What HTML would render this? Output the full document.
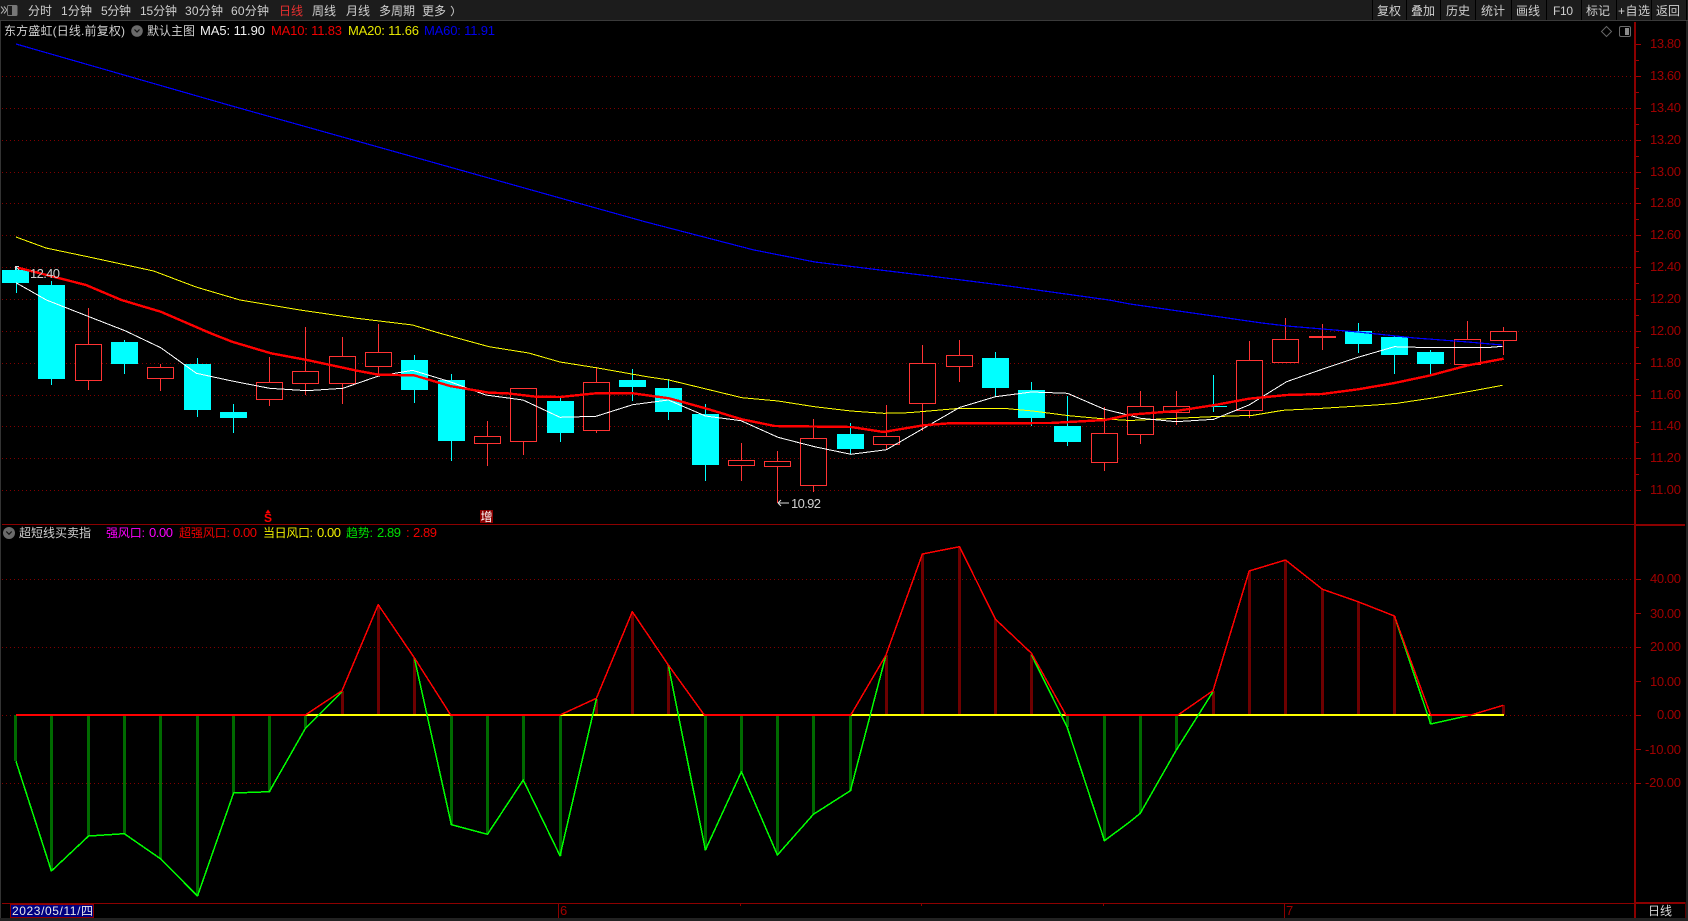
<!DOCTYPE html>
<html lang="zh">
<head>
<meta charset="utf-8">
<title>东方盛虹 日线</title>
<style>
html,body{margin:0;padding:0;background:#000;overflow:hidden}
svg{display:block;position:absolute;left:0;top:0}
text{font-family:"Liberation Sans","Noto Sans CJK SC",sans-serif;font-size:12px}
.tb text{fill:#cfcfcf}
.ax text{fill:#a00000;font-size:13px;text-anchor:start}
.num{font-size:13px}
.cr{shape-rendering:crispEdges}
</style>
</head>
<body>
<svg width="1688" height="921" viewBox="0 0 1688 921" xmlns="http://www.w3.org/2000/svg">
<rect width="1688" height="921" fill="#000"/>

<!-- toolbar -->
<rect width="1688" height="20" fill="#1c1c1c"/>
<rect y="20" width="1688" height="1" fill="#3a3a3a"/>
<path d="M1 6.5L4 10L1 13.5M4 6.5L7 10L4 13.5" fill="none" stroke="#b0b0b0"/>
<rect x="7.5" y="5.5" width="9.5" height="10" rx="1" fill="#1c1c1c" stroke="#777"/>
<rect x="12" y="6" width="5" height="9" fill="#777"/>
<g class="tb">
<text x="28" y="15" textLength="24">分时</text>
<text x="61" y="15" textLength="31">1分钟</text>
<text x="101" y="15" textLength="30">5分钟</text>
<text x="140" y="15" textLength="37">15分钟</text>
<text x="185" y="15" textLength="38">30分钟</text>
<text x="231" y="15" textLength="38">60分钟</text>
<text x="279" y="15" textLength="24" style="fill:#e83030">日线</text>
<text x="312" y="15" textLength="24">周线</text>
<text x="346" y="15" textLength="24">月线</text>
<text x="379" y="15" textLength="36">多周期</text>
<text x="422" y="15" textLength="24">更多</text>
<path d="M451 6Q456 11 451 16" fill="none" stroke="#bbb"/>
<text x="1377" y="15" textLength="24">复权</text>
<text x="1411" y="15" textLength="24">叠加</text>
<text x="1446" y="15" textLength="24">历史</text>
<text x="1481" y="15" textLength="24">统计</text>
<text x="1516" y="15" textLength="24">画线</text>
<text x="1553" y="15" textLength="20">F10</text>
<text x="1586" y="15" textLength="24">标记</text>
<text x="1618" y="15" textLength="32">+自选</text>
<text x="1656" y="15" textLength="24">返回</text>
</g>
<path d="M1372.5 0V20M1406.5 0V20M1440.5 0V20M1475.5 0V20M1511.5 0V20M1546.5 0V20M1581.5 0V20M1616.5 0V20M1651.5 0V20M1686.5 0V20" stroke="#000"/>

<!-- frame -->
<rect x="0" y="21" width="1" height="900" fill="#333"/>
<rect x="1686" y="21" width="2" height="900" fill="#222"/>
<rect x="0" y="918" width="1688" height="3" fill="#222"/>

<!-- grid -->
<path d="M2 76.5H1634M2 108.5H1634M2 140.5H1634M2 172.5H1634M2 203.5H1634M2 235.5H1634M2 267.5H1634M2 299.5H1634M2 331.5H1634M2 363.5H1634M2 395.5H1634M2 426.5H1634M2 458.5H1634M2 490.5H1634M2 579.5H1634M2 647.5H1634M2 715.5H1634M2 783.5H1634" stroke="#800000" stroke-dasharray="1 3" fill="none"/>

<!-- axes -->
<rect x="1634" y="22" width="2" height="896" fill="#8c0000"/>
<rect x="2" y="524" width="1632" height="1" fill="#8c0000"/>
<rect x="1634" y="524" width="51" height="2" fill="#8c0000"/>
<rect x="2" y="903" width="1632" height="1" fill="#8c0000"/>
<rect x="1634" y="902" width="51" height="2" fill="#8c0000"/>
<rect x="1685" y="902" width="1" height="16" fill="#5a0000"/>
<path d="M558.5 903V918M1284.5 903V918" stroke="#8c0000"/>
<path d="M740.5 903V906M921.5 903V906M1103.5 903V906" stroke="#8c0000"/>
<path d="M1636 44.5h5M1636 76.5h5M1636 108.5h5M1636 140.5h5M1636 172.5h5M1636 203.5h5M1636 235.5h5M1636 267.5h5M1636 299.5h5M1636 331.5h5M1636 363.5h5M1636 395.5h5M1636 426.5h5M1636 458.5h5M1636 490.5h5M1636 579.5h5M1636 613.5h5M1636 647.5h5M1636 681.5h5M1636 715.5h5M1636 749.5h5M1636 783.5h5" stroke="#a00000"/>
<path d="M1636 60.5h3M1636 92.5h3M1636 124.5h3M1636 156.5h3M1636 188.5h3M1636 219.5h3M1636 251.5h3M1636 283.5h3M1636 315.5h3M1636 347.5h3M1636 379.5h3M1636 411.5h3M1636 442.5h3M1636 474.5h3" stroke="#a00000"/>
<g class="ax">
<text x="1650" y="48" textLength="31">13.80</text>
<text x="1650" y="80" textLength="31">13.60</text>
<text x="1650" y="112" textLength="31">13.40</text>
<text x="1650" y="144" textLength="31">13.20</text>
<text x="1650" y="176" textLength="31">13.00</text>
<text x="1650" y="207" textLength="31">12.80</text>
<text x="1650" y="239" textLength="31">12.60</text>
<text x="1650" y="271" textLength="31">12.40</text>
<text x="1650" y="303" textLength="31">12.20</text>
<text x="1650" y="335" textLength="31">12.00</text>
<text x="1650" y="367" textLength="31">11.80</text>
<text x="1650" y="399" textLength="31">11.60</text>
<text x="1650" y="430" textLength="31">11.40</text>
<text x="1650" y="462" textLength="31">11.20</text>
<text x="1650" y="494" textLength="31">11.00</text>
<text x="1650" y="583" textLength="31">40.00</text>
<text x="1650" y="618" textLength="31">30.00</text>
<text x="1650" y="651" textLength="31">20.00</text>
<text x="1650" y="686" textLength="31">10.00</text>
<text x="1657" y="719" textLength="24">0.00</text>
<text x="1645" y="754" textLength="36">-10.00</text>
<text x="1645" y="787" textLength="36">-20.00</text>
</g>

<!-- up candles -->
<g stroke="#ff3333" fill="#000">
<path d="M88.5 308V390M160.5 364V391M269.5 357V406M305.5 327V395M342.5 337V404M378.5 324V375M487.5 421V466M523.5 388V455M596.5 367V433M741.5 443V481M777.5 451V503M813.5 419V492M886.5 405V449M922.5 345V431M959.5 340V382M1104.5 407V471M1140.5 391V444M1176.5 391V425M1249.5 341V418M1285.5 318V363M1322.5 324V350M1467.5 321V365M1503.5 327V355"/>
<rect x="75.5" y="344.5" width="26" height="36"/>
<rect x="147.5" y="367.5" width="26" height="11"/>
<rect x="256.5" y="382.5" width="26" height="17"/>
<rect x="292.5" y="371.5" width="26" height="12"/>
<rect x="329.5" y="356.5" width="26" height="27"/>
<rect x="365.5" y="352.5" width="26" height="14"/>
<rect x="474.5" y="436.5" width="26" height="7"/>
<rect x="510.5" y="388.5" width="26" height="53"/>
<rect x="583.5" y="382.5" width="26" height="48"/>
<rect x="728.5" y="460.5" width="26" height="5"/>
<rect x="764.5" y="461.5" width="26" height="5"/>
<rect x="800.5" y="438.5" width="26" height="47"/>
<rect x="873.5" y="436.5" width="26" height="8"/>
<rect x="909.5" y="363.5" width="26" height="40"/>
<rect x="946.5" y="355.5" width="26" height="11"/>
<rect x="1091.5" y="433.5" width="26" height="29"/>
<rect x="1127.5" y="406.5" width="26" height="28"/>
<rect x="1163.5" y="406.5" width="26" height="6"/>
<rect x="1236.5" y="360.5" width="26" height="50"/>
<rect x="1272.5" y="339.5" width="26" height="23"/>
<rect x="1309" y="336" width="27" height="2" fill="#ff3333" stroke="none"/>
<rect x="1454.5" y="339.5" width="26" height="25"/>
<rect x="1490.5" y="331.5" width="26" height="9"/>
</g>
<!-- down candles -->
<g fill="#00ffff">
<path stroke="#00ffff" d="M16.5 267V293M51.5 281V385M124.5 340V374M197.5 358V417M233.5 404V433M414.5 355V403M451.5 374V461M560.5 396V442M632.5 369V401M668.5 379V420M705.5 404V481M850.5 423V454M995.5 352V396M1031.5 382V426M1067.5 396V446M1213.5 375V412M1358.5 323V353M1394.5 336V374M1430.5 350V374"/>
<rect x="2" y="270" width="27" height="13"/>
<rect x="38" y="285" width="27" height="94"/>
<rect x="111" y="342" width="27" height="22"/>
<rect x="184" y="364" width="27" height="46"/>
<rect x="220" y="412" width="27" height="6"/>
<rect x="401" y="360" width="27" height="30"/>
<rect x="438" y="380" width="27" height="61"/>
<rect x="547" y="401" width="27" height="32"/>
<rect x="619" y="380" width="27" height="7"/>
<rect x="655" y="388" width="27" height="24"/>
<rect x="692" y="414" width="27" height="51"/>
<rect x="837" y="434" width="27" height="15"/>
<rect x="982" y="358" width="27" height="30"/>
<rect x="1018" y="390" width="27" height="28"/>
<rect x="1054" y="426" width="27" height="16"/>
<rect x="1200" y="406" width="27" height="1"/>
<rect x="1345" y="331" width="27" height="13"/>
<rect x="1381" y="337" width="27" height="18"/>
<rect x="1417" y="352" width="27" height="12"/>
</g>

<!-- moving averages -->
<g fill="none" stroke-linejoin="round" class="cr">
<polyline stroke="#0000ff" stroke-width="1.2" points="16,44 232,106 560,198 646,222 754,250 815,262 880,270 930,276 1001,285 1109,300 1130,304 1262,323 1287,326 1358,332 1415,338 1468,342 1502,345"/>
<polyline stroke="#ffff00" stroke-width="1" points="16,237 46,248 89,257 153.6,271 196,287 240,300 300,310 357,318.3 412.5,325 439,333 489,346.7 528.6,353 560,362 596,367.7 647,376.7 669,380 742,397.7 778,401 814.5,406.7 851,411 883.5,413.3 909,412.7 960,408.3 1003.5,408.3 1032.5,411 1069,415.7 1105,419 1130,420.5 1176,418.3 1212,416.7 1253,415.3 1283,410.3 1322,408.3 1375.6,405 1397,403.3 1432.5,398 1468,391.7 1502.6,385.3"/>
<polyline stroke="#ffffff" stroke-width="1" points="16,282.7 46.4,300 89,316.7 125,330.7 160.7,347.7 196.4,373.3 232,381 269.6,388.3 307,390.7 342.9,388.3 378.6,376 412.5,370.3 450,381.7 485.7,395 523,400 560,417.3 596,416.3 632.7,404.7 668.3,400 705.4,416 741,420.7 778,437.3 814.5,446.7 851,454.3 886.4,449.7 923.5,428.3 960,407.3 995.5,396.7 1031.5,392 1067.5,393.3 1104.5,409.3 1130,415.5 1140.7,418.3 1176,421.7 1213.6,419.3 1249,405 1286.6,381.7 1322,369.3 1358,357.3 1394.4,346.7 1432.5,347.7 1486,347.7 1502.6,346.3"/>
<polyline stroke="#ff0000" stroke-width="2.4" points="18,267.7 86,285 121.4,300 160.7,311.7 210.7,333.3 232,341.7 271,353.3 307,360 357,370.7 378.6,374.7 414,375.3 450,386 489,392.7 507,393.3 536,396.7 560,397 596,393.3 632.7,393.3 669,398.3 705.4,408.3 741.8,419.3 774.5,426 851,427 883.5,432 923.5,425.3 949,423.3 1050.7,423 1105,420 1130,414.7 1176,411 1215,405 1249,398.7 1286.6,395 1322,394 1358,389.3 1393,383.3 1429,375.7 1468,365.3 1503.7,358.7"/>
</g>

<!-- price markers -->
<path d="M16 267L19 270M15.5 270V266.5H19" fill="none" stroke="#ddd"/>
<text x="30" y="278" class="num" textLength="30" fill="#cfcfcf">12.40</text>
<path d="M778 503H789M778 503L781 500M778 503L781 506" fill="none" stroke="#ddd"/>
<text x="791" y="508" class="num" textLength="30" fill="#cfcfcf">10.92</text>
<path d="M268 509.5L270.5 513H265.5Z" fill="#f00"/>
<text x="264" y="522" style="font-size:12px;font-weight:bold" fill="#f00">S</text>
<rect x="480" y="510" width="13" height="13" fill="#8b0000"/>
<text x="480.5" y="521" style="font-size:12px" fill="#fff">增</text>

<!-- title row -->
<text x="4" y="35" textLength="121" fill="#cfcfcf">东方盛虹(日线.前复权)</text>
<circle cx="137" cy="31" r="5.8" fill="#6a6a6a"/>
<path d="M134.5 29.5L137 32L139.5 29.5" fill="none" stroke="#111" stroke-width="1.2"/>
<text x="147" y="35" textLength="48" fill="#cfcfcf">默认主图</text>
<text x="200" y="35" class="num" textLength="65" fill="#f0f0f0">MA5: 11.90</text>
<text x="271" y="35" class="num" textLength="71" fill="#f00000">MA10: 11.83</text>
<text x="348" y="35" class="num" textLength="71" fill="#e6e600">MA20: 11.66</text>
<text x="424" y="35" class="num" textLength="71" fill="#0000ee">MA60: 11.91</text>
<path d="M1606.5 26.5L1611.5 31.5L1606.5 36.5L1601.5 31.5Z" fill="none" stroke="#666"/>
<rect x="1619.5" y="26.5" width="11" height="10" rx="1.5" fill="#000" stroke="#6a6a6a"/>
<rect x="1625" y="28" width="4" height="7" fill="#8a8a8a"/>

<!-- indicator row -->
<circle cx="9" cy="533" r="6" fill="#6a6a6a"/>
<path d="M6.3 531.5L9 534.3L11.7 531.5" fill="none" stroke="#111" stroke-width="1.2"/>
<text x="19" y="537" textLength="72" fill="#cfcfcf">超短线买卖指</text>
<text x="106" y="537" textLength="39" fill="#ff00ff">强风口:</text>
<text x="149" y="537" class="num" textLength="24" fill="#ff00ff">0.00</text>
<text x="179" y="537" textLength="51" fill="#f00000">超强风口:</text>
<text x="233" y="537" class="num" textLength="24" fill="#f00000">0.00</text>
<text x="263" y="537" textLength="50" fill="#f0f000">当日风口:</text>
<text x="317" y="537" class="num" textLength="24" fill="#f0f000">0.00</text>
<text x="346" y="537" textLength="27" fill="#00e000">趋势:</text>
<text x="377" y="537" class="num" textLength="24" fill="#00e000">2.89</text>
<text x="406" y="537" class="num" fill="#f00000">:</text>
<text x="413" y="537" class="num" textLength="24" fill="#f00000">2.89</text>

<!-- indicator bars -->
<g stroke-width="3" fill="none" class="cr">
<path stroke="#006a00" d="M15.5 715V761M51.5 715V871M88.5 715V836M124.5 715V834M160.5 715V859M197.5 715V896M233.5 715V793M269.5 715V792M305.5 715V728M451.5 715V825M487.5 715V834M523.5 715V780M560.5 715V856M705.5 715V850M741.5 715V772M777.5 715V855M813.5 715V814M850.5 715V791M1067.5 715V727M1104.5 715V841M1140.5 715V813M1176.5 715V750M1430.5 715V724"/>
<path stroke="#6e0000" d="M342.5 715V691M378.5 715V605M414.5 715V658M596.5 715V699M632.5 715V612M668.5 715V665M886.5 715V655M922.5 715V554M959.5 715V547M995.5 715V619M1031.5 715V654M1213.5 715V691M1249.5 715V571M1285.5 715V560M1322.5 715V589M1358.5 715V602M1394.5 715V616M1503.5 715V705"/>
</g>
<!-- indicator lines -->
<rect x="16" y="714" width="1488" height="2" fill="#ffff00"/>
<g fill="none" stroke-width="1.5" stroke-linejoin="round" class="cr">
<polyline stroke="#00ff00" points="16,761.3 51.4,871 88.6,836 124.3,833.7 160.4,858.7 197.5,896 233.6,793 269.3,791.7 305.4,728.3 342,691.7"/>
<polyline stroke="#00ff00" points="414.3,657.7 451.4,824.7 487.5,834.3 523.2,780 560,855.7 596.4,699"/>
<polyline stroke="#00ff00" points="668.3,665 705.4,850 741.4,771.7 777.4,855 813.4,814.3 850.4,790.7 886,655"/>
<polyline stroke="#00ff00" points="1031.5,655 1067,726.7 1104.5,840.7 1130,821.7 1140.3,813.3 1176.3,750 1213,691.7"/>
<polyline stroke="#00ff00" points="1394.4,616 1430.7,724 1468,715.7"/>
<polyline stroke="#ff0000" points="16,715 305.4,715 342,690.7 378.2,604.7 414.3,657.7 450.7,715 560,715 596.4,698.3 632.3,611.7 668.3,665 704.3,715 850.8,715 886,655 922.4,554 959.5,546.7 995.5,619.3 1031.5,653.3 1066,715 1178,715 1213,690.7 1249.2,571 1285.5,560 1322.5,589.3 1358,601.7 1394.4,616 1430.7,715 1471,715 1503.3,705.3"/>
</g>
<g>
<rect x="16" y="714" width="289" height="2" fill="#ff0000"/>
<rect x="451" y="714" width="109" height="2" fill="#ff0000"/>
<rect x="704" y="714" width="147" height="2" fill="#ff0000"/>
<rect x="1066" y="714" width="112" height="2" fill="#ff0000"/>
<rect x="1431" y="714" width="40" height="2" fill="#ff0000"/>
</g>

<!-- date row -->
<rect x="10.5" y="904.5" width="83" height="13" fill="#000080" stroke="#8c0000"/>
<text x="12" y="915" textLength="81" fill="#e8e8e8">2023/05/11/四</text>
<text x="560" y="915" class="num" fill="#a00000">6</text>
<text x="1286" y="915" class="num" fill="#a00000">7</text>
<text x="1648" y="915" textLength="24" fill="#d8d8d8">日线</text>
</svg>
</body>
</html>
